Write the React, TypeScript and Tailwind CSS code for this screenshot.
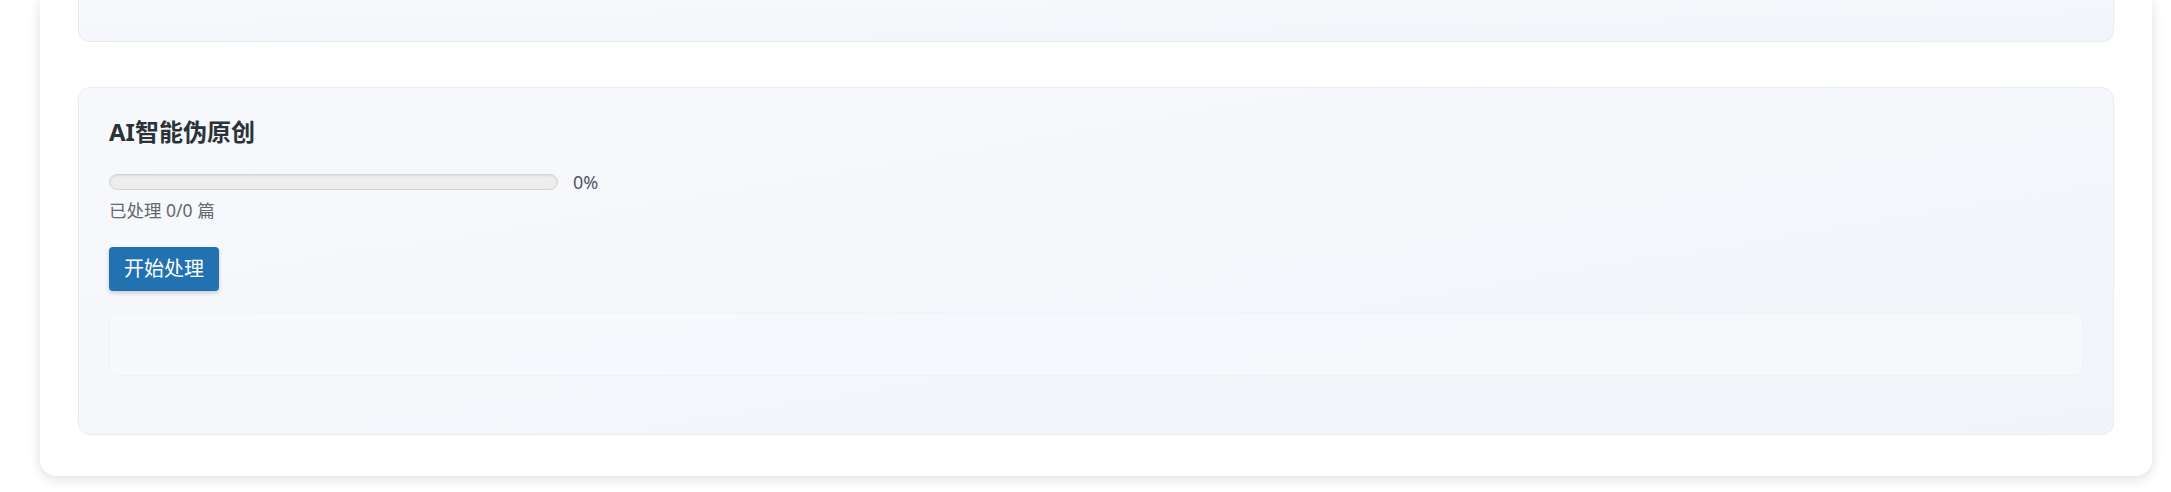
export default function App() {
  return (
    <div className="min-h-screen bg-white font-['Noto_Sans','Noto_Sans_CJK_SC',sans-serif]">
      <div className="ml-[40px] w-[2112px] rounded-b-[16px] bg-white px-[38px] pb-[41px] shadow-[0_3px_12px_rgba(0,0,0,0.13)]">
        {/* previous section, only its bottom is in view */}
        <div className="h-[42px] rounded-b-[12px] border-x border-b border-[#e8ecf1] bg-gradient-to-br from-[#f7f9fd] to-[#f1f4f8]" />

        <div className="mt-[45px] rounded-[12px] border border-[#e8ecf1] bg-gradient-to-br from-[#f7f9fd] to-[#f1f4f8] px-[30px] pt-[29px] pb-[31px]">
          <h3 className="text-[24px] font-bold leading-[29px] text-[#2c3338]">AI智能伪原创</h3>

          <div className="mt-[22px] flex h-[27px] items-center gap-[15px]">
            <div className="h-[16px] w-[449px] rounded-full border border-[#d3d5d8] bg-[#ededee] shadow-[inset_0_1px_2px_rgba(0,0,0,0.08)]" />
            <span className="text-[18px] leading-[26px] text-[#50575e]">0%</span>
          </div>

          <div className="mt-[2px] text-[17.5px] leading-[26px] text-[#646970]">已处理 0/0 篇</div>

          <button className="mt-[24px] h-[44px] rounded-[4px] bg-[#2271b1] px-[15px] text-[20px] leading-[44px] text-white shadow-[0_2px_4px_rgba(0,0,0,0.18)]">
            开始处理
          </button>

          <div className="mt-[22px] mb-[27px] h-[63px] rounded-[10px] border border-[#f0f2f6] bg-[#f8fafd]/70" />
        </div>
      </div>
    </div>
  );
}
